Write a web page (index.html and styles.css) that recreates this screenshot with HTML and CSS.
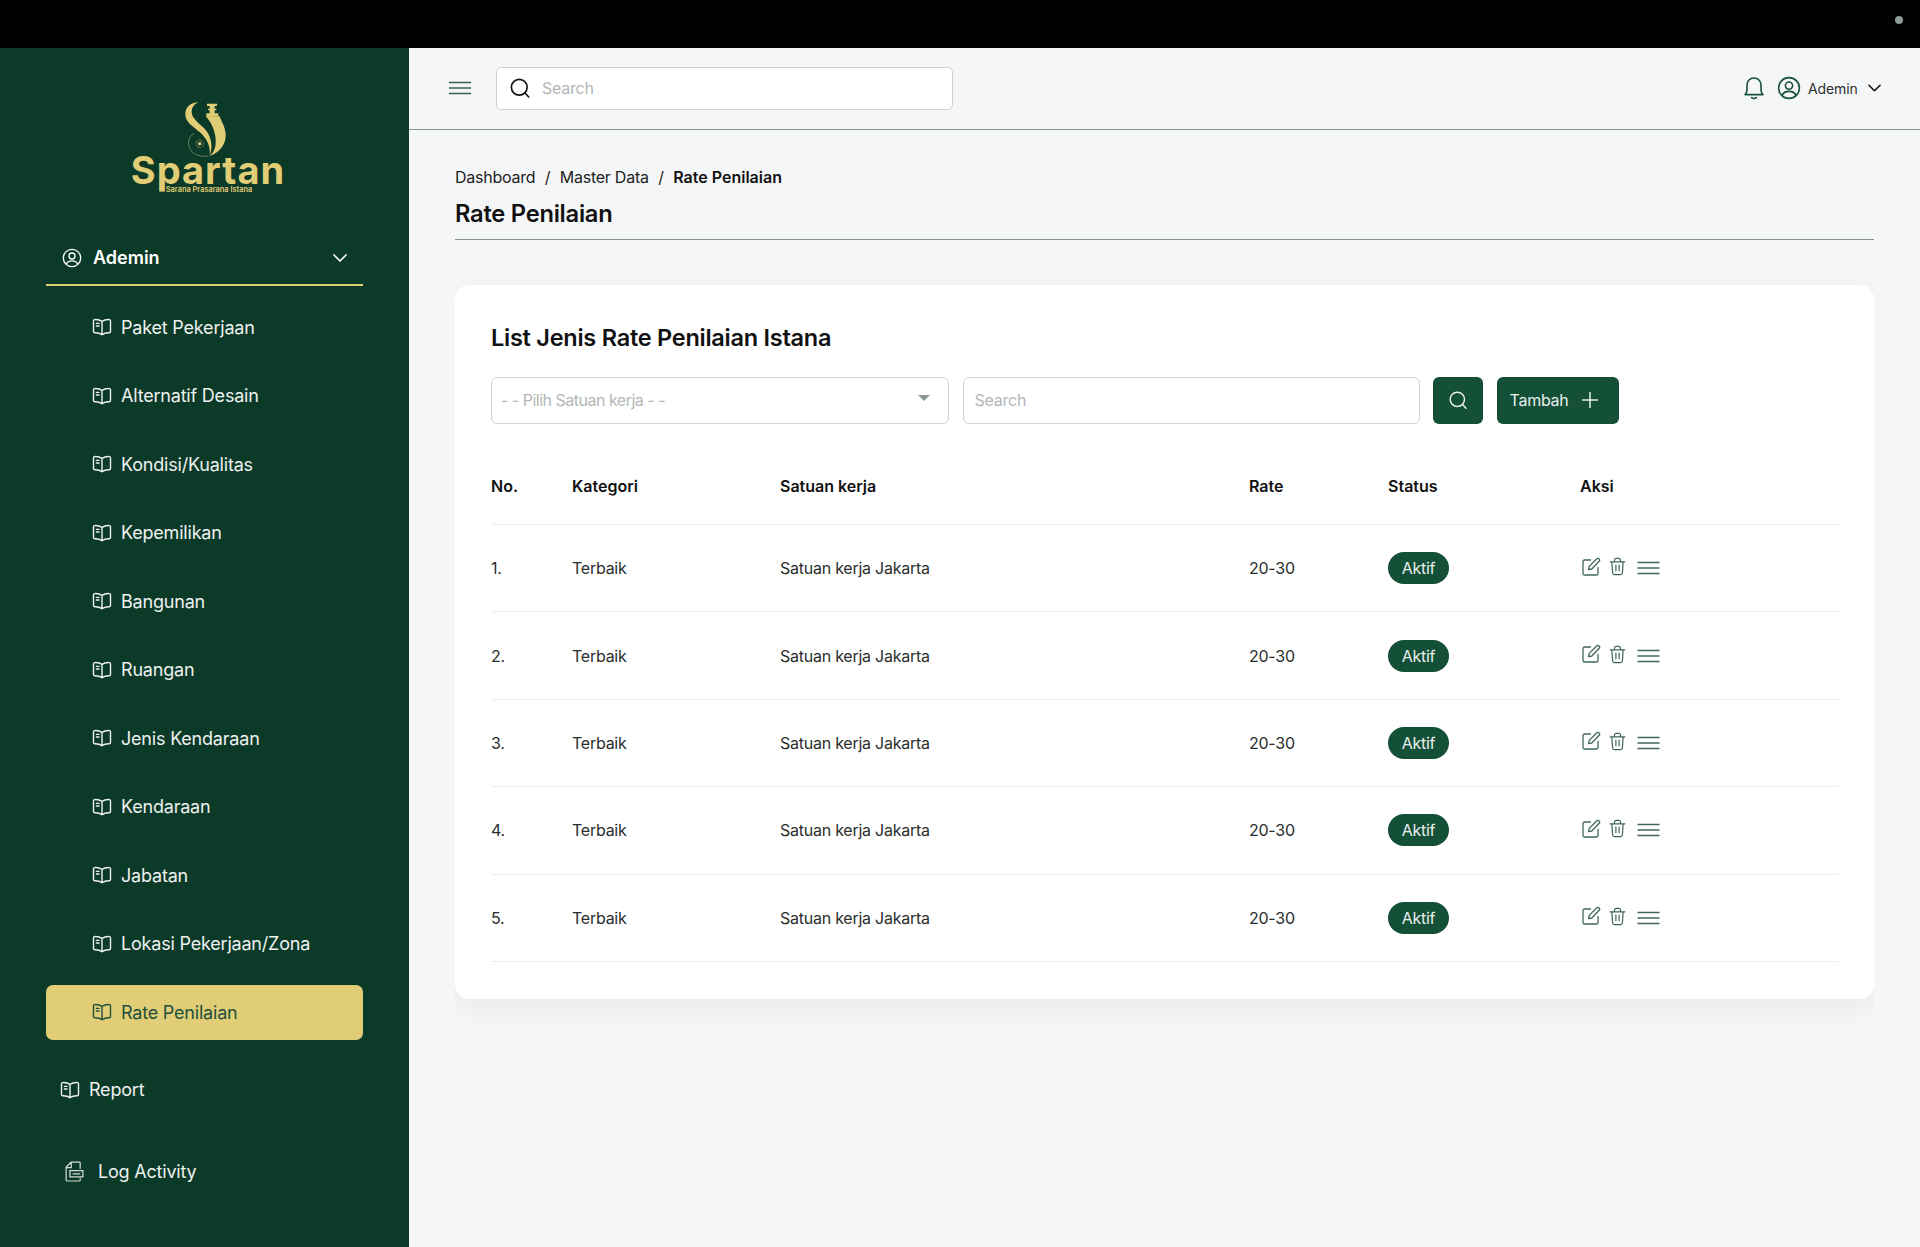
FILE: index.html
```html
<!DOCTYPE html>
<html lang="id">
<head>
<meta charset="utf-8">
<title>Rate Penilaian</title>
<link rel="stylesheet" href="styles.css">
</head>
<body>
<svg class="defs" width="0" height="0" aria-hidden="true">
  <symbol id="book" viewBox="0 0 20 20"><path d="M10 4.4C8 3 5.4 2.4 2.6 2.6 1.9 2.7 1.5 3.1 1.5 3.8V14.6C1.5 15.3 1.9 15.7 2.6 15.7 5.4 15.6 8 16.2 10 17.8 12 16.2 14.6 15.6 17.4 15.7 18.1 15.7 18.5 15.3 18.5 14.6V3.8C18.5 3.1 18.1 2.7 17.4 2.6 14.6 2.4 12 3 10 4.4ZM10 4.4V17.8M4.4 6.4H7M4.4 9H7" fill="none" stroke="currentColor" stroke-width="1.4" stroke-linejoin="round" stroke-linecap="round"/></symbol>
  <symbol id="search" viewBox="0 0 24 24"><circle cx="11.2" cy="11.2" r="8.6" fill="none" stroke="currentColor" stroke-width="1.8"/><path d="M17.5 17.5 21.5 21.8" fill="none" stroke="currentColor" stroke-width="1.8" stroke-linecap="round"/></symbol>
  <symbol id="user" viewBox="0 0 24 24"><g fill="none" stroke="currentColor" stroke-width="1.6"><circle cx="12" cy="12" r="10.4"/><circle cx="12" cy="9.6" r="3.6"/><path d="M5 19.4C6.4 16.4 9 15.4 12 15.4S17.6 16.4 19 19.4"/></g></symbol>
  <symbol id="chev" viewBox="0 0 14 8"><path d="M1 1 7 7 13 1" fill="none" stroke="currentColor" stroke-width="1.7" stroke-linecap="round" stroke-linejoin="round"/></symbol>
  <symbol id="menu" viewBox="0 0 22 14"><path d="M0 1.5H22M0 7H22M0 12.5H22" fill="none" stroke="currentColor" stroke-width="1.3"/></symbol>
  <symbol id="edit" viewBox="0 0 20 20"><path d="M9.5 3H3.6C2.6 3 2 3.6 2 4.6V16.4C2 17.4 2.6 18 3.6 18H15.4C16.4 18 17 17.4 17 16.4V10.5M7.6 12.6 8.2 9.4 15.8 1.8C16.4 1.2 17.2 1.2 17.8 1.8L18.2 2.2C18.8 2.8 18.8 3.6 18.2 4.2L10.8 12Z" fill="none" stroke="currentColor" stroke-width="1.3" stroke-linejoin="round" stroke-linecap="round"/></symbol>
  <symbol id="trash" viewBox="0 0 18 20"><path d="M1.2 5H16.8M3 5 3.8 16.6C3.9 17.8 4.6 18.6 5.8 18.6H12.2C13.4 18.6 14.1 17.8 14.2 16.6L15 5M5.8 5V3.4C5.8 2.2 6.6 1.4 7.8 1.4H10.2C11.4 1.4 12.2 2.2 12.2 3.4V5M7.3 8.6V14.4M10.7 8.6V14.4" fill="none" stroke="currentColor" stroke-width="1.3" stroke-linejoin="round" stroke-linecap="round"/></symbol>
</svg>

<div class="statusbar"><span class="camera"></span></div>

<div class="shell">
  <aside class="sidebar">
    <div class="logo">
      <svg class="logo-mark" viewBox="550 295 135 180" aria-hidden="true">
        <path class="gold" d="M597 304C572 306 556 320 557 342 558 366 582 378 600 394 620 412 634 436 630 466 640 440 636 410 618 388 600 368 576 354 576 334 576 320 584 310 597 304Z"/>
        <path class="gold" d="M618 346C640 372 650 400 648 430 647 445 640 458 630 466 660 456 680 430 678 400 676 376 664 360 660 347Z"/>
        <path class="gold" d="M622 309H652V316H645V324H650V329H645V338H656V346H620V338H630V329H625V324H630V316H622Z"/>
        <path class="arc" d="M583 398C568 408 564 424 568 438 574 458 596 470 626 466"/>
        <circle class="seal" cx="600" cy="429" r="11"/>
        <circle class="gold" cx="600" cy="429" r="5"/>
      </svg>
      <div class="wordmark">Spartan</div>
      <div class="tagline">Sarana Prasarana Istana</div>
    </div>

    <div class="role">
      <svg class="ic-role"><use href="#user"/></svg>
      <span class="role-name">Ademin</span>
      <svg class="ic-chev"><use href="#chev"/></svg>
    </div>

    <nav class="menu">
      <a class="item"><svg class="ic-book"><use href="#book"/></svg>Paket Pekerjaan</a>
      <a class="item"><svg class="ic-book"><use href="#book"/></svg>Alternatif Desain</a>
      <a class="item"><svg class="ic-book"><use href="#book"/></svg>Kondisi/Kualitas</a>
      <a class="item"><svg class="ic-book"><use href="#book"/></svg>Kepemilikan</a>
      <a class="item"><svg class="ic-book"><use href="#book"/></svg>Bangunan</a>
      <a class="item"><svg class="ic-book"><use href="#book"/></svg>Ruangan</a>
      <a class="item"><svg class="ic-book"><use href="#book"/></svg>Jenis Kendaraan</a>
      <a class="item"><svg class="ic-book"><use href="#book"/></svg>Kendaraan</a>
      <a class="item"><svg class="ic-book"><use href="#book"/></svg>Jabatan</a>
      <a class="item"><svg class="ic-book"><use href="#book"/></svg>Lokasi Pekerjaan/Zona</a>
      <a class="item active"><svg class="ic-book"><use href="#book"/></svg>Rate Penilaian</a>
    </nav>

    <a class="top-link report"><svg class="ic-book"><use href="#book"/></svg>Report</a>
    <a class="top-link log">
      <svg class="ic-log" viewBox="0 0 20 22" aria-hidden="true"><path d="M16 8V2.2C16 1.6 15.6 1.2 15 1.2H6.4L1.2 6.4V20C1.2 20.6 1.6 21 2.2 21H15C15.6 21 16 20.6 16 20V18M6.6 1.4V6.8H1.4M5.2 10.2H18.8V16.6H5.2ZM8 13.4H16" fill="none" stroke="currentColor" stroke-width="1.3"/></svg>
      Log Activity
    </a>
  </aside>

  <main class="main">
    <header class="topbar">
      <svg class="ic-menu"><use href="#menu"/></svg>
      <div class="top-search">
        <svg class="ic-search"><use href="#search"/></svg>
        <span class="ph">Search</span>
      </div>
      <div class="top-right">
        <svg class="ic-bell" viewBox="0 0 22 24" aria-hidden="true"><path d="M2 18.6C3.6 17.4 4 15.6 4 13V9C4 5 7 2 11 2S18 5 18 9V13C18 15.6 18.4 17.4 20 18.6ZM8.6 21.6C9.8 22.6 12.2 22.6 13.4 21.6" fill="none" stroke="currentColor" stroke-width="1.6" stroke-linejoin="round" stroke-linecap="round"/></svg>
        <svg class="ic-user"><use href="#user"/></svg>
        <span class="top-name">Ademin</span>
        <svg class="ic-top-chev"><use href="#chev"/></svg>
      </div>
    </header>

    <div class="content">
      <div class="crumbs"><span>Dashboard</span><i>/</i><span>Master Data</span><i>/</i><b>Rate Penilaian</b></div>
      <h1 class="page-title">Rate Penilaian</h1>

      <section class="card">
        <h2 class="card-title">List Jenis Rate Penilaian Istana</h2>
        <div class="filters">
          <div class="field select"><span class="ph">- - Pilih Satuan kerja - -</span><span class="caret"></span></div>
          <div class="field"><span class="ph">Search</span></div>
          <button class="btn btn-icon"><svg class="ic-btn-search"><use href="#search"/></svg></button>
          <button class="btn btn-add">Tambah
            <svg class="ic-plus" viewBox="0 0 16 16" aria-hidden="true"><path d="M8 0V16M0 8H16" fill="none" stroke="currentColor" stroke-width="1.5"/></svg>
          </button>
        </div>

        <table class="table">
          <colgroup><col class="c-no"><col class="c-cat"><col class="c-sat"><col class="c-rate"><col class="c-status"><col></colgroup>
          <thead><tr><th>No.</th><th>Kategori</th><th>Satuan kerja</th><th>Rate</th><th>Status</th><th>Aksi</th></tr></thead>
          <tbody>
            <tr><td>1.</td><td>Terbaik</td><td>Satuan kerja Jakarta</td><td>20-30</td><td><span class="badge">Aktif</span></td><td><div class="acts"><svg class="ic-edit"><use href="#edit"/></svg><svg class="ic-trash"><use href="#trash"/></svg><svg class="ic-lines"><use href="#menu"/></svg></div></td></tr>
            <tr><td>2.</td><td>Terbaik</td><td>Satuan kerja Jakarta</td><td>20-30</td><td><span class="badge">Aktif</span></td><td><div class="acts"><svg class="ic-edit"><use href="#edit"/></svg><svg class="ic-trash"><use href="#trash"/></svg><svg class="ic-lines"><use href="#menu"/></svg></div></td></tr>
            <tr><td>3.</td><td>Terbaik</td><td>Satuan kerja Jakarta</td><td>20-30</td><td><span class="badge">Aktif</span></td><td><div class="acts"><svg class="ic-edit"><use href="#edit"/></svg><svg class="ic-trash"><use href="#trash"/></svg><svg class="ic-lines"><use href="#menu"/></svg></div></td></tr>
            <tr><td>4.</td><td>Terbaik</td><td>Satuan kerja Jakarta</td><td>20-30</td><td><span class="badge">Aktif</span></td><td><div class="acts"><svg class="ic-edit"><use href="#edit"/></svg><svg class="ic-trash"><use href="#trash"/></svg><svg class="ic-lines"><use href="#menu"/></svg></div></td></tr>
            <tr><td>5.</td><td>Terbaik</td><td>Satuan kerja Jakarta</td><td>20-30</td><td><span class="badge">Aktif</span></td><td><div class="acts"><svg class="ic-edit"><use href="#edit"/></svg><svg class="ic-trash"><use href="#trash"/></svg><svg class="ic-lines"><use href="#menu"/></svg></div></td></tr>
          </tbody>
        </table>
      </section>
    </div>
  </main>
</div>
</body>
</html>
```

FILE: styles.css
```css
* { box-sizing: border-box; }
html, body { margin: 0; height: 100%; }
body {
  display: flex;
  flex-direction: column;
  height: 1247px;
  overflow: hidden;
  background: #f5f6f8;
  color: #1d211f;
  font-family: "Inter", "Noto Sans", sans-serif;
  font-size: 16px;
  letter-spacing: -0.25px;
}
.defs { position: absolute; }
svg { display: block; flex: none; }

.statusbar {
  flex: none;
  height: 47.5px;
  background: #000;
  display: flex;
  align-items: center;
  justify-content: flex-end;
  padding: 0 17px 7px 0;
}
.camera { width: 8px; height: 8px; border-radius: 50%; background: #8b9a94; }

.shell { flex: 1; display: flex; min-height: 0; }

/* Sidebar */
.sidebar {
  flex: none;
  width: 409px;
  background: #0c3a29;
  color: #eef1ef;
  padding: 51px 46px 0;
  font-size: 18px;
  letter-spacing: -0.2px;
}
.logo { display: flex; flex-direction: column; align-items: center; height: 131px; }
.logo-mark { width: 45px; height: 60px; margin-left: 2px; }
.gold { fill: #e0cd75; }
.arc { fill: none; stroke: #8f9f85; stroke-width: 2; }
.seal { fill: none; stroke: #c9bb74; stroke-width: 3; stroke-dasharray: 2 2; }
.wordmark {
  margin-top: -7px;
  margin-left: 7px;
  color: #e0cd75;
  font-size: 38px;
  line-height: 36px;
  font-weight: 700;
  letter-spacing: 1px;
}
.tagline {
  margin-top: -2px;
  margin-left: 9px;
  color: #e0cd75;
  font-size: 7.4px;
  line-height: 8px;
  font-weight: 600;
  letter-spacing: 0;
  white-space: nowrap;
}
.role {
  height: 56px;
  display: flex;
  align-items: center;
  padding: 2px 16px 0;
  border-bottom: 2px solid #e0cd75;
  color: #fff;
}
.ic-role { width: 20px; height: 20px; margin-right: 11px; }
.role-name { font-weight: 600; flex: 1; letter-spacing: 0; }
.ic-chev { width: 14px; height: 8px; }
.menu { display: flex; flex-direction: column; gap: 13.5px; margin-top: 14px; }
.item {
  height: 55px;
  display: flex;
  align-items: center;
  gap: 9px;
  padding-left: 46px;
  border-radius: 7px;
}
.ic-book { width: 20px; height: 20px; }
.item.active { background: #e0cd75; color: #22503e; }
.top-link { display: flex; align-items: center; height: 55px; }
.report { margin-top: 22.5px; padding-left: 14px; gap: 9px; }
.log { margin-top: 27px; padding-left: 19px; gap: 14px; }
.ic-log { width: 19px; height: 21px; color: #d5dbd6; }

/* Main */
.main { flex: 1; min-width: 0; }
.topbar {
  height: 82px;
  display: flex;
  align-items: center;
  padding: 0 39px 0 40px;
  border-bottom: 1px solid #87938d;
}
.ic-menu { width: 22px; height: 14px; color: #3f5f52; margin-right: 25px; }
.top-search {
  width: 457px;
  height: 43px;
  display: flex;
  align-items: center;
  gap: 11px;
  padding-left: 12px;
  background: #fff;
  border: 1px solid #cfd2d1;
  border-radius: 5px;
}
.ic-search { width: 22px; height: 22px; color: #111; }
.ph { color: #b4b7b6; }
.top-right { margin-left: auto; display: flex; align-items: center; color: #18513c; }
.ic-bell { width: 22px; height: 24px; margin-right: 12px; }
.ic-user { width: 24px; height: 24px; margin-right: 7px; }
.top-name { font-size: 14px; color: #2b2f2d; width: 60px; letter-spacing: -0.1px; }
.ic-top-chev { width: 13px; height: 8px; color: #111; }

.content { padding: 37px 46px 0 46px; }
.crumbs { display: flex; align-items: center; height: 20px; color: #222; }
.crumbs i { font-style: normal; margin: 0 9.5px; }
.crumbs b { font-weight: 600; color: #111; letter-spacing: 0; }
.page-title {
  margin: 10px 0 0;
  height: 43px;
  line-height: 34px;
  font-size: 23.7px;
  font-weight: 600;
  color: #111;
  border-bottom: 1px solid #87938d;
}

.card {
  margin-top: 45px;
  padding: 36px 36px 37px;
  background: #fff;
  border-radius: 14px;
  box-shadow: 0 8px 32px rgba(0, 0, 0, 0.06);
  clip-path: inset(-20px 0 -36px 0);
}
.card-title { margin: 0; font-size: 23.5px; line-height: 34px; font-weight: 600; color: #111; }
.filters { display: flex; gap: 13.5px; margin-top: 22px; }
.field {
  width: 457px;
  height: 47px;
  display: flex;
  align-items: center;
  padding: 0 11px;
  border: 1px solid #cfd2d1;
  border-radius: 6px;
  background: #fff;
}
.select { justify-content: space-between; width: 458px; padding-left: 9px; }
.select .ph { letter-spacing: -0.5px; }
.caret {
  width: 0;
  height: 0;
  margin: 0 7px 5px 0;
  border-left: 6px solid transparent;
  border-right: 6px solid transparent;
  border-top: 6px solid #8e9a95;
}
.btn {
  height: 47px;
  border: 0;
  border-radius: 6px;
  background: #144f38;
  color: #e9efec;
  font: inherit;
  letter-spacing: inherit;
  display: flex;
  align-items: center;
  justify-content: center;
}
.btn-icon { width: 50px; }
.ic-btn-search { width: 20px; height: 20px; }
.btn-add { width: 122px; gap: 13px; justify-content: flex-start; padding-left: 13px; }
.ic-plus { width: 16px; height: 16px; }

.table {
  width: 100%;
  margin-top: 25px;
  border-collapse: collapse;
  table-layout: fixed;
}
.c-no { width: 81px; }
.c-cat { width: 208px; }
.c-sat { width: 469px; }
.c-rate { width: 139px; }
.c-status { width: 192px; }
th, td { padding: 0; text-align: left; border-bottom: 1px solid #eceded; }
th { height: 76px; font-weight: 600; color: #111; letter-spacing: 0; }
td { height: 87.4px; color: #2a2e2c; }
.badge {
  display: inline-block;
  width: 61px;
  height: 32px;
  line-height: 32px;
  text-align: center;
  border-radius: 16px;
  background: #144f38;
  color: #e9efec;
}
.acts { display: flex; align-items: center; color: #3f6757; padding-left: 1px; margin-top: -3px; }
.ic-edit { width: 20px; height: 20px; margin-right: 8px; }
.ic-trash { width: 17px; height: 19px; margin-right: 11px; }
.ic-lines { width: 23px; height: 14px; margin-top: 3px; }
```
